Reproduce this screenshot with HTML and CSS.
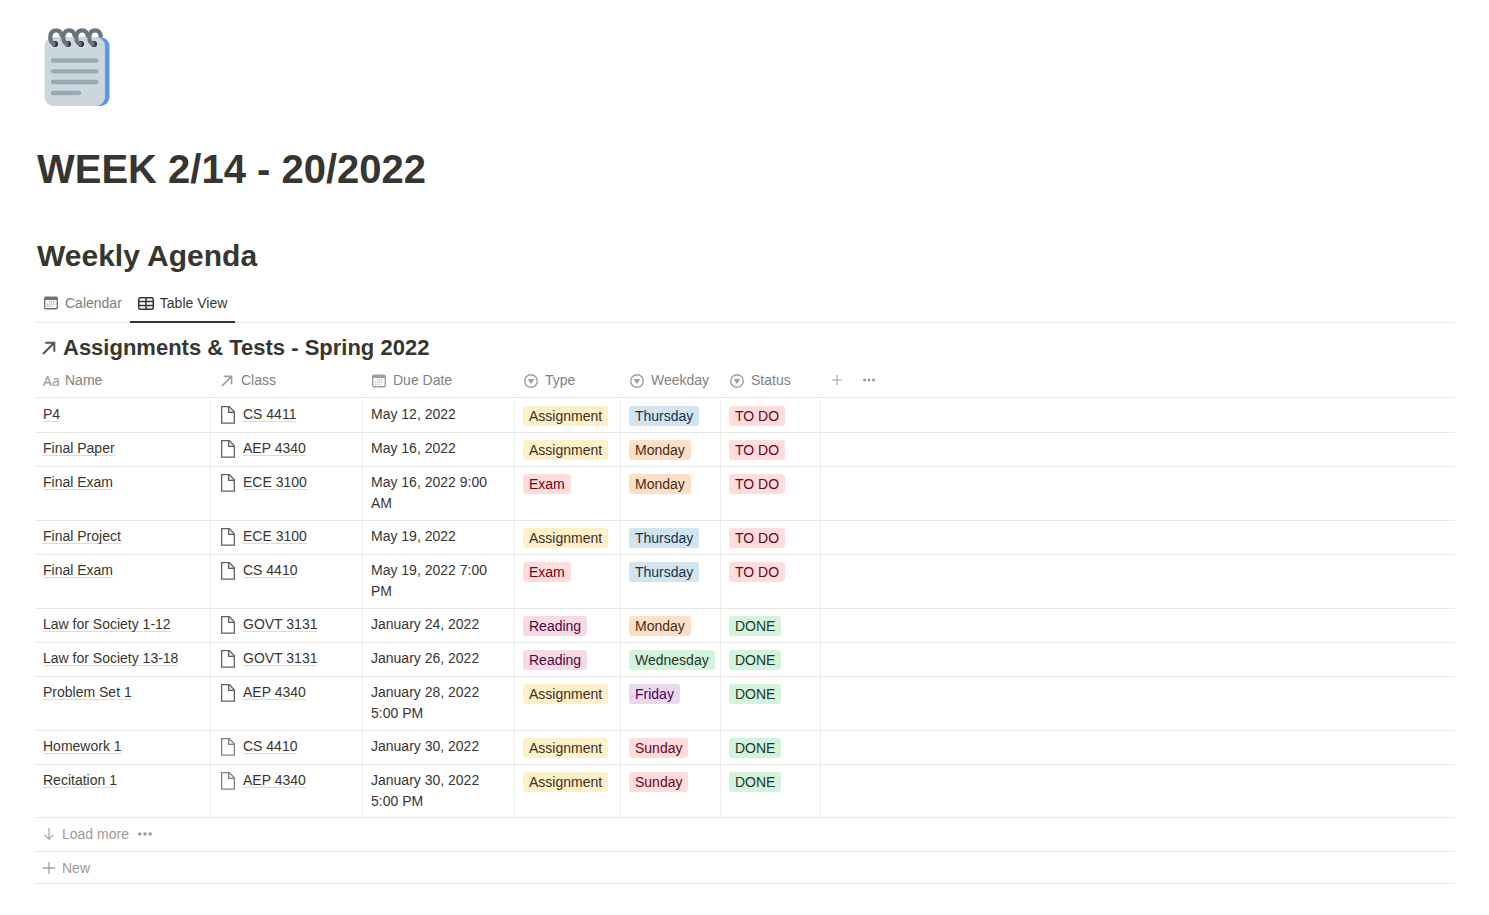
FILE: index.html
```
<!DOCTYPE html>
<html lang="en">
<head>
<meta charset="utf-8">
<title>WEEK 2/14 - 20/2022</title>
<link rel="stylesheet" href="styles.css">
</head>
<body>
<svg class="defs" aria-hidden="true">
  <symbol id="arrow" viewBox="0 0 14 14"><path d="M1 13 12 2M3.300 1.700H12.300V10.700" fill="none" stroke="currentColor" stroke-width="2"/></symbol>
  <symbol id="cal" viewBox="0 0 14 14"><path fill-rule="evenodd" fill="currentColor" d="M2 .5H12A2 2 0 0 1 14 2.500V11.500A2 2 0 0 1 12 13.500H2A2 2 0 0 1 0 11.500V2.500A2 2 0 0 1 2 .5ZM1.400 4V11.200A.9 .9 0 0 0 2.300 12.100H11.700A.9 .9 0 0 0 12.600 11.200V4Z"/><path d="M5 5.900H11.500M3 8.100H11.500M3 10.200H9.300" stroke="currentColor" stroke-width="1.1" stroke-dasharray="1.2 .9" opacity=".75"/></symbol>
  <symbol id="sel" viewBox="0 0 14 14"><circle cx="7" cy="7" r="6.300" fill="none" stroke="currentColor" stroke-width="1.4"/><path d="M4.600 4.900H9.400Q10.100 5 9.800 5.700L7.500 9.500Q7 10 6.500 9.500L4.200 5.700Q3.900 5 4.600 4.900Z" fill="currentColor"/></symbol>
  <symbol id="page" viewBox="0 0 14 18"><path d="M.65.65H8.300L13.350 5.800V17.050H.65ZM7.600 1V6.300H13" fill="none" stroke="currentColor" stroke-width="1.3"/><path d="M8 1 13 6H8Z" fill="currentColor" opacity=".15"/></symbol>
  <symbol id="dots" viewBox="0 0 14 4"><circle cx="1.8" cy="2" r="1.75"/><circle cx="7" cy="2" r="1.75"/><circle cx="12.2" cy="2" r="1.75"/></symbol>
  <symbol id="plus" viewBox="0 0 12 12"><path d="M6 0V12M0 6H12" fill="none" stroke="currentColor" stroke-width="1.3"/></symbol>
</svg>
<main class="sheet">
  <svg class="notepad" viewBox="0 0 66 78" aria-hidden="true">
    <rect x="9" y="9" width="56.500" height="69" rx="9" fill="#5599eb"/>
    <rect x=".5" y="9" width="60.500" height="69" rx="9" fill="#ccd6dd"/>
    <path d="M9 32.500H52.500M9 43.300H52.500M9 54H52.500M9 65H35" stroke="#99aab5" stroke-width="4.3" stroke-linecap="round"/>
    <g fill="#292f33"><circle cx="11" cy="16" r="3"/><circle cx="24" cy="16" r="3"/><circle cx="37" cy="16" r="3"/><circle cx="50" cy="16" r="3"/></g>
    <g fill="none" stroke="#66757f" stroke-width="4.2">
      <path id="ring" d="M11.500 16.800C7.500 15.500 6 12 6.300 8.500 6.800 4.300 9.200 2.300 12.200 2.300 15.500 2.300 17.500 4.600 18 9"/>
      <use href="#ring" x="13"/><use href="#ring" x="26"/><use href="#ring" x="39"/>
    </g>
  </svg>
  <h1 class="title">WEEK 2/14 - 20/2022</h1>
  <h2 class="agenda">Weekly Agenda</h2>
  <nav class="tabs">
    <div class="tab"><svg class="i14"><use href="#cal"/></svg>Calendar</div>
    <div class="tab tab-on"><svg class="tbl" viewBox="0 0 16 13"><rect x=".75" y=".75" width="14.500" height="11.500" rx="1.500"/><path d="M1 4.500H15M1 8.500H15M8 1V12"/></svg>Table View</div>
  </nav>
  <h3 class="dbname"><svg class="i14"><use href="#arrow"/></svg>Assignments &amp; Tests - Spring 2022</h3>
  <section class="table">
    <div class="row head">
      <div><span class="aa">Aa</span>Name</div>
      <div><svg class="arr"><use href="#arrow"/></svg>Class</div>
      <div><svg class="i14"><use href="#cal"/></svg>Due Date</div>
      <div><svg class="i14"><use href="#sel"/></svg>Type</div>
      <div><svg class="i14"><use href="#sel"/></svg>Weekday</div>
      <div><svg class="i14"><use href="#sel"/></svg>Status</div>
      <div class="tools"><svg class="plus10"><use href="#plus"/></svg><svg class="dots"><use href="#dots"/></svg></div>
    </div>
    <div class="row"><div><a>P4</a></div><div><svg class="pg"><use href="#page"/></svg><a>CS 4411</a></div><div>May 12, 2022</div><div><b class="yellow">Assignment</b></div><div><b class="blue">Thursday</b></div><div><b class="red">TO DO</b></div></div>
    <div class="row"><div><a>Final Paper</a></div><div><svg class="pg"><use href="#page"/></svg><a>AEP 4340</a></div><div>May 16, 2022</div><div><b class="yellow">Assignment</b></div><div><b class="orange">Monday</b></div><div><b class="red">TO DO</b></div></div>
    <div class="row"><div><a>Final Exam</a></div><div><svg class="pg"><use href="#page"/></svg><a>ECE 3100</a></div><div>May 16, 2022 9:00 AM</div><div><b class="red">Exam</b></div><div><b class="orange">Monday</b></div><div><b class="red">TO DO</b></div></div>
    <div class="row"><div><a>Final Project</a></div><div><svg class="pg"><use href="#page"/></svg><a>ECE 3100</a></div><div>May 19, 2022</div><div><b class="yellow">Assignment</b></div><div><b class="blue">Thursday</b></div><div><b class="red">TO DO</b></div></div>
    <div class="row"><div><a>Final Exam</a></div><div><svg class="pg"><use href="#page"/></svg><a>CS 4410</a></div><div>May 19, 2022 7:00 PM</div><div><b class="red">Exam</b></div><div><b class="blue">Thursday</b></div><div><b class="red">TO DO</b></div></div>
    <div class="row"><div><a>Law for Society 1-12</a></div><div><svg class="pg"><use href="#page"/></svg><a>GOVT 3131</a></div><div>January 24, 2022</div><div><b class="pink">Reading</b></div><div><b class="orange">Monday</b></div><div><b class="green">DONE</b></div></div>
    <div class="row"><div><a>Law for Society 13-18</a></div><div><svg class="pg"><use href="#page"/></svg><a>GOVT 3131</a></div><div>January 26, 2022</div><div><b class="pink">Reading</b></div><div><b class="green">Wednesday</b></div><div><b class="green">DONE</b></div></div>
    <div class="row"><div><a>Problem Set 1</a></div><div><svg class="pg"><use href="#page"/></svg><a>AEP 4340</a></div><div>January 28, 2022 5:00 PM</div><div><b class="yellow">Assignment</b></div><div><b class="purple">Friday</b></div><div><b class="green">DONE</b></div></div>
    <div class="row"><div><a>Homework 1</a></div><div><svg class="pg soft"><use href="#page"/></svg><a>CS 4410</a></div><div>January 30, 2022</div><div><b class="yellow">Assignment</b></div><div><b class="red">Sunday</b></div><div><b class="green">DONE</b></div></div>
    <div class="row last"><div><a>Recitation 1</a></div><div><svg class="pg soft"><use href="#page"/></svg><a>AEP 4340</a></div><div>January 30, 2022 5:00 PM</div><div><b class="yellow">Assignment</b></div><div><b class="red">Sunday</b></div><div><b class="green">DONE</b></div></div>
    <div class="foot more"><svg class="down" viewBox="0 0 12 12"><path d="M6 0V11M1.500 6.700 6 11.200 10.500 6.700"/></svg>Load more<svg class="dots"><use href="#dots"/></svg></div>
    <div class="foot"><svg class="plus12"><use href="#plus"/></svg>New</div>
  </section>
</main>
</body>
</html>
```
FILE: styles.css
```
* { box-sizing: border-box; }
body { margin: 0; background: #fff; color: #37352f; font: 14px/21px "Liberation Sans", Arial, sans-serif; overflow: hidden; }
svg { flex: none; display: block; }
.defs { width: 0; height: 0; position: absolute; }
.sheet { width: 1420px; margin-left: 35px; padding-top: 28px; }
.notepad { width: 66px; height: 78px; margin-left: 9px; }
.title { margin: 39px 0 0 2px; font-size: 40px; line-height: 48px; }
.agenda { margin: 43px 0 0 2px; font-size: 30px; line-height: 39px; }
.tabs { display: flex; height: 48px; border-bottom: 1px solid #e9e9e7; color: #7d7c78; }
.tab { display: flex; align-items: center; height: 48px; padding: 8px 8px 0 9px; gap: 7px; }
.tab .i14 { color: #73726e; }
.tab-on { color: #37352f; border-bottom: 2px solid #37352f; padding: 10px 8px 0; gap: 6px; }
.tbl { width: 16px; height: 13px; fill: none; stroke: #37352f; stroke-width: 1.5; }
.i14 { width: 14px; height: 14px; }
.dbname { display: flex; align-items: center; gap: 7px; height: 30px; margin: 10px 0 0; padding-left: 7px; font-size: 22px; line-height: 30px; }
.dbname svg { color: #55534e; }
.row { display: grid; grid-template-columns: 176px 152px 152px 106px 100px 100px 1fr; min-height: 34px; border-bottom: 1px solid #e9e9e7; }
.row > div { display: flex; align-items: flex-start; padding: 5px 8px 6px; border-right: 1px solid #ededeb; }
.row.last > div { padding-bottom: 5px; }
.head { height: 35px; margin-bottom: 1px; color: #82817d; }
.head > div { border: 0; padding: 7px 0 0 9px; gap: 7px; }
.head > div:first-child { padding-left: 8px; gap: 6px; }
.head .i14 { margin-top: 4px; color: #a09f9b; }
.arr { width: 12px; height: 12px; margin: 5px 1px 0 1px; color: #a09f9b; }
.aa { width: 16px; font: 14px/22px "Noto Sans", sans-serif; color: #a3a29e; -webkit-text-stroke: .2px #a3a29e; }
.row.head > .tools { padding: 17px 0 0 11px; gap: 21px; align-items: center; height: 22px; color: #a3a29e; }
.row.head > .tools svg { margin-top: -5px; }
.plus10 { width: 10px; height: 10px; }
.dots { width: 14px; height: 4px; fill: #9b9a97; }
.head .dots { width: 12px; }
a { background: linear-gradient(#dcdbd9, #dcdbd9) 0 100% / 100% 1px no-repeat; }
.row a { height: 18px; line-height: 20px; }
.pg { width: 14px; height: 18px; margin: 2px 8px 0 2px; color: #62615b; }
.soft { color: #83827d; }
.row b { height: 20px; margin-top: 2px; padding: 0 6px; border-radius: 3px; line-height: 20px; font-weight: 400; }
.yellow { background: #fcf1c9; color: #402c1b; }
.blue { background: #d2e4ef; color: #183347; }
.red { background: #ffdddd; color: #6e0019; }
.orange { background: #fddfc8; color: #4a2a10; }
.pink { background: #f8d9e7; color: #4c0a35; }
.green { background: #d4f3dc; color: #1c3829; }
.purple { background: #ead8ed; color: #4b005e; }
.foot { display: flex; align-items: center; height: 32px; border-bottom: 1px solid #e9e9e7; padding: 1px 8px 0; gap: 7px; color: #9b9a97; }
.more { height: 34px; padding-top: 0; }
.more svg { margin-bottom: 1px; }
.more .dots { margin-left: 2px; }
.down { width: 12px; height: 12px; fill: none; stroke: #b0afac; stroke-width: 1.4; }
.plus12 { width: 12px; height: 12px; color: #a3a29e; }
```
